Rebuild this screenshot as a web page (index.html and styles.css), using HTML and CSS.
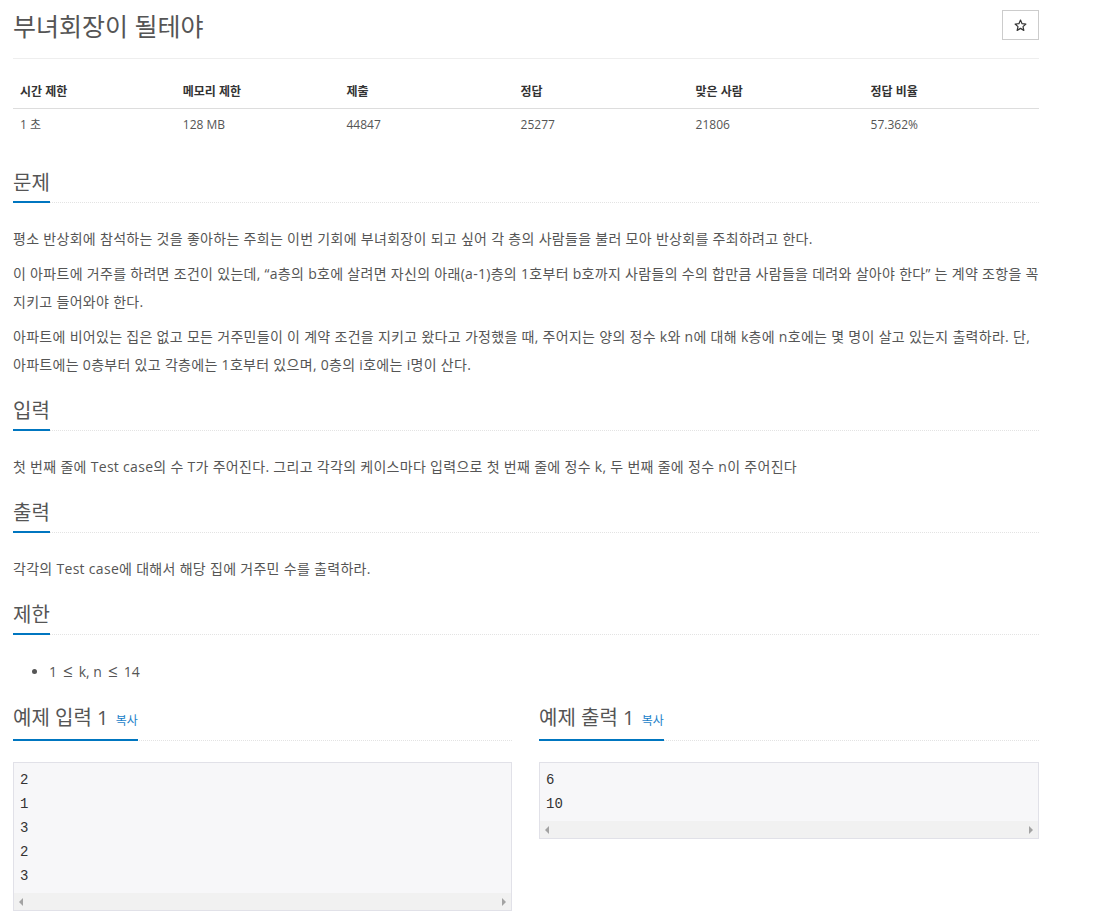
FILE: index.html
```html
<!DOCTYPE html>
<html lang="ko">
<head>
  <meta charset="UTF-8">
  <title>부녀회장이 될테야</title>
  <link rel="stylesheet" href="styles.css">
</head>
<body>
  <div class="page">
    <!-- 제목 -->
    <div class="page-header">
      <h1>부녀회장이 될테야</h1>
      <button class="star-btn" type="button" aria-label="즐겨찾기">
        <svg width="13" height="13" viewBox="0 0 24 24"><polygon points="12,2 14.9,8.6 22,9.3 16.6,14 18.2,21 12,17.3 5.8,21 7.4,14 2,9.3 9.1,8.6" fill="none" stroke="#333" stroke-width="2.2" stroke-linejoin="round"/></svg>
      </button>
    </div>

    <!-- 제한 정보 -->
    <table class="info-table">
      <thead>
        <tr>
          <th class="c1">시간 제한</th>
          <th class="c2">메모리 제한</th>
          <th class="c3">제출</th>
          <th class="c4">정답</th>
          <th class="c5">맞은 사람</th>
          <th class="c6">정답 비율</th>
        </tr>
      </thead>
      <tbody>
        <tr>
          <td>1 초</td>
          <td>128 MB</td>
          <td>44847</td>
          <td>25277</td>
          <td>21806</td>
          <td>57.362%</td>
        </tr>
      </tbody>
    </table>

    <section class="problem-section first">
      <h2 class="headline"><span>문제</span></h2>
      <p>평소 반상회에 참석하는 것을 좋아하는 주희는 이번 기회에 부녀회장이 되고 싶어 각 층의 사람들을 불러 모아 반상회를 주최하려고 한다.</p>
      <p>이 아파트에 거주를 하려면 조건이 있는데, “a층의 b호에 살려면 자신의 아래(a-1)층의 1호부터 b호까지 사람들의 수의 합만큼 사람들을 데려와 살아야 한다” 는 계약 조항을 꼭 지키고 들어와야 한다.</p>
      <p>아파트에 비어있는 집은 없고 모든 거주민들이 이 계약 조건을 지키고 왔다고 가정했을 때, 주어지는 양의 정수 k와 n에 대해 k층에 n호에는 몇 명이 살고 있는지 출력하라. 단, 아파트에는 0층부터 있고 각층에는 1호부터 있으며, 0층의 i호에는 i명이 산다.</p>
    </section>

    <section class="problem-section">
      <h2 class="headline"><span>입력</span></h2>
      <p>첫 번째 줄에 Test case의 수 T가 주어진다. 그리고 각각의 케이스마다 입력으로 첫 번째 줄에 정수 k, 두 번째 줄에 정수 n이 주어진다</p>
    </section>

    <section class="problem-section">
      <h2 class="headline"><span>출력</span></h2>
      <p>각각의 Test case에 대해서 해당 집에 거주민 수를 출력하라.</p>
    </section>

    <section class="problem-section">
      <h2 class="headline"><span>제한</span></h2>
      <ul class="limit-list">
        <li class="math">1<span class="rel">≤</span>k, n<span class="rel">≤</span>14</li>
      </ul>
    </section>

    <!-- 예제 -->
    <div class="samples">
      <div class="sample">
        <h2 class="headline"><span>예제 입력 1 <a class="copy-link" href="#">복사</a></span></h2>
        <div class="sample-box">
          <pre>2
1
3
2
3</pre>
          <div class="fake-scroll"><i class="arr-left"></i><i class="arr-right"></i></div>
        </div>
      </div>
      <div class="sample">
        <h2 class="headline"><span>예제 출력 1 <a class="copy-link" href="#">복사</a></span></h2>
        <div class="sample-box">
          <pre>6
10</pre>
          <div class="fake-scroll"><i class="arr-left"></i><i class="arr-right"></i></div>
        </div>
      </div>
    </div>
  </div>
</body>
</html>
```

FILE: styles.css
```css
/* 기본 스타일 */
body {
  margin: 0;
  background-color: #fff;
  font-family: "Open Sans", "Noto Sans CJK KR", sans-serif;
  color: #555;
}
.page {
  width: 1026px;
  padding: 0 13px;
}
/* 제목 영역 */
.page-header {
  display: flex;
  justify-content: space-between;
  align-items: flex-start;
  padding-top: 8px;
  padding-bottom: 14px;
  border-bottom: 1px solid #eee;
}
.page-header h1 {
  margin: 0;
  font-size: 25px;
  font-weight: normal;
  line-height: 36px;
  color: #555;
}
.star-btn {
  margin-top: 2px;
  width: 37px;
  height: 30px;
  padding: 0;
  border: 1px solid #ccc;
  background-color: #fff;
  display: flex;
  align-items: center;
  justify-content: center;
}
/* 제한 정보 표 */
.info-table {
  width: 100%;
  margin-top: 17px;
  border-collapse: collapse;
  font-size: 12px;
}
.info-table th,
.info-table td {
  padding: 8px 7px;
  line-height: 16px;
  text-align: left;
}
.info-table th {
  font-weight: bold;
  color: #333;
  border-bottom: 1px solid #ddd;
}
.info-table td {
  color: #555;
}
.c1, .c2 { width: 164px; }
.c3, .c6 { width: 174px; }
.c4, .c5 { width: 175px; }
/* 섹션 */
.problem-section {
  margin-bottom: 18px;
  font-size: 14px;
}
.problem-section.first {
  margin-top: 28px;
}
.headline {
  display: flex;
  margin: 0 0 22px;
  font-size: 20px;
  font-weight: normal;
  line-height: 28px;
  color: #555;
  border-bottom: 1px dotted #e3e3e3;
}
.headline span {
  display: block;
  padding-bottom: 4px;
  border-bottom: 2px solid #0076c0;
  margin-bottom: -1px;
}
.problem-section p {
  margin: 0 0 7px;
  line-height: 28px;
  letter-spacing: 0.3px;
  word-break: keep-all;
}
.problem-section p:last-child {
  margin-bottom: 0;
}
.limit-list {
  margin: 0;
  padding-left: 36px;
  line-height: 28px;
}
.math .rel {
  font-size: 17px;
  padding: 0 6px;
}
/* 예제 */
.samples {
  display: grid;
  grid-template-columns: 499px 500px;
  gap: 27px;
}
.copy-link {
  font-size: 12px;
  color: #1a7fc9;
  text-decoration: none;
  margin-left: 2px;
}
.sample .headline {
  margin-bottom: 21px;
}
.sample-box {
  border: 1px solid #e1e1e8;
  background-color: #f7f7f9;
}
.sample-box pre {
  margin: 0;
  padding: 5px 6px;
  font-family: "Liberation Mono", "DejaVu Sans Mono", monospace;
  font-size: 14px;
  line-height: 24px;
  color: #333;
}
.fake-scroll {
  height: 17px;
  background-color: #f1f1f1;
  display: flex;
  justify-content: space-between;
  align-items: center;
  padding: 0 5px;
}
.arr-left,
.arr-right {
  width: 0;
  height: 0;
  border-top: 4px solid transparent;
  border-bottom: 4px solid transparent;
}
.arr-left {
  border-right: 4px solid #a3a3a3;
}
.arr-right {
  border-left: 4px solid #a3a3a3;
}
```
